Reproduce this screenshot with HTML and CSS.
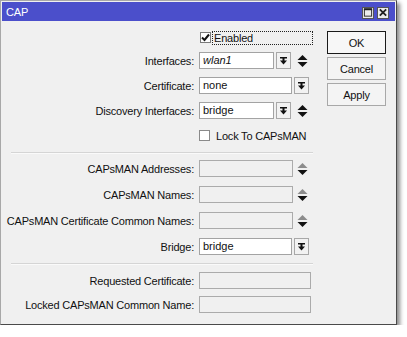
FILE: index.html
```html
<!DOCTYPE html>
<html lang="en">
<head>
    <meta charset="UTF-8">
    <meta name="viewport" content="width=device-width, initial-scale=1.0">
    <link rel="stylesheet" href="styles.css">
    <title>CAP</title>
</head>
<body>
    <div class="window">
        <div class="titlebar">
            <span class="title">CAP</span>
            <div class="winbtns">
                <span class="winbtn">
                    <svg width="11" height="11" viewBox="0 0 11 11"><rect x="1.5" y="1.5" width="8" height="8" fill="none" stroke="#222" stroke-width="1"/><rect x="1" y="1" width="9" height="2" fill="#222"/></svg>
                </span>
                <span class="winbtn">
                    <svg width="11" height="11" viewBox="0 0 11 11"><path d="M2 2 L9 9 M9 2 L2 9" stroke="#222" stroke-width="2"/></svg>
                </span>
            </div>
        </div>
        <div class="content">
            <div class="form">
                <div class="section s1">
                    <div class="row short">
                        <span class="label"></span>
                        <div class="check">
                            <span class="box">
                                <svg width="9" height="9" viewBox="0 0 9 9"><path d="M1 4.5 L3.5 7 L8 1.5" fill="none" stroke="#111" stroke-width="2"/></svg>
                            </span>
                            <span class="focus">Enabled</span>
                        </div>
                    </div>
                    <div class="row">
                        <span class="label">Interfaces:</span>
                        <div class="field">
                            <span class="input w75"><i>wlan1</i></span>
                            <span class="drop"><svg width="9" height="9" viewBox="0 0 9 9"><rect x="1" y="1" width="7" height="1.5" fill="#111"/><rect x="3.5" y="2" width="2" height="3" fill="#111"/><path d="M1 4.5 H8 L4.5 8.5 Z" fill="#111"/></svg></span>
                            <span class="spin"><svg width="11" height="12" viewBox="0 0 11 12"><path d="M0.5 5 L5.5 0 L10.5 5 Z" fill="#111"/><path d="M0.5 7 H10.5 L5.5 12 Z" fill="#111"/></svg></span>
                        </div>
                    </div>
                    <div class="row">
                        <span class="label">Certificate:</span>
                        <div class="field">
                            <span class="input w93">none</span>
                            <span class="drop"><svg width="9" height="9" viewBox="0 0 9 9"><rect x="1" y="1" width="7" height="1.5" fill="#111"/><rect x="3.5" y="2" width="2" height="3" fill="#111"/><path d="M1 4.5 H8 L4.5 8.5 Z" fill="#111"/></svg></span>
                        </div>
                    </div>
                    <div class="row">
                        <span class="label">Discovery Interfaces:</span>
                        <div class="field">
                            <span class="input w75">bridge</span>
                            <span class="drop"><svg width="9" height="9" viewBox="0 0 9 9"><rect x="1" y="1" width="7" height="1.5" fill="#111"/><rect x="3.5" y="2" width="2" height="3" fill="#111"/><path d="M1 4.5 H8 L4.5 8.5 Z" fill="#111"/></svg></span>
                            <span class="spin"><svg width="11" height="12" viewBox="0 0 11 12"><path d="M0.5 5 L5.5 0 L10.5 5 Z" fill="#111"/><path d="M0.5 7 H10.5 L5.5 12 Z" fill="#111"/></svg></span>
                        </div>
                    </div>
                    <div class="row short lock">
                        <span class="label"></span>
                        <div class="check">
                            <span class="box plain"></span>
                            <span class="text">Lock To CAPsMAN</span>
                        </div>
                    </div>
                </div>

                <div class="sep sep1"></div>

                <div class="section s2">
                    <div class="row">
                        <span class="label">CAPsMAN Addresses:</span>
                        <div class="field">
                            <span class="input off w94"></span>
                            <span class="spin off"><svg width="11" height="12" viewBox="0 0 11 12"><path d="M0.5 5 L5.5 0 L10.5 5 Z" fill="#8c8c8c"/><path d="M0.5 7 H10.5 L5.5 12 Z" fill="#111"/></svg></span>
                        </div>
                    </div>
                    <div class="row">
                        <span class="label">CAPsMAN Names:</span>
                        <div class="field">
                            <span class="input off w94"></span>
                            <span class="spin off"><svg width="11" height="12" viewBox="0 0 11 12"><path d="M0.5 5 L5.5 0 L10.5 5 Z" fill="#8c8c8c"/><path d="M0.5 7 H10.5 L5.5 12 Z" fill="#111"/></svg></span>
                        </div>
                    </div>
                    <div class="row">
                        <span class="label">CAPsMAN Certificate Common Names:</span>
                        <div class="field">
                            <span class="input off w94"></span>
                            <span class="spin off"><svg width="11" height="12" viewBox="0 0 11 12"><path d="M0.5 5 L5.5 0 L10.5 5 Z" fill="#8c8c8c"/><path d="M0.5 7 H10.5 L5.5 12 Z" fill="#111"/></svg></span>
                        </div>
                    </div>
                    <div class="row">
                        <span class="label">Bridge:</span>
                        <div class="field">
                            <span class="input w93">bridge</span>
                            <span class="drop"><svg width="9" height="9" viewBox="0 0 9 9"><rect x="1" y="1" width="7" height="1.5" fill="#111"/><rect x="3.5" y="2" width="2" height="3" fill="#111"/><path d="M1 4.5 H8 L4.5 8.5 Z" fill="#111"/></svg></span>
                        </div>
                    </div>
                </div>

                <div class="sep sep2"></div>

                <div class="section s3">
                    <div class="row">
                        <span class="label">Requested Certificate:</span>
                        <div class="field">
                            <span class="input off w112"></span>
                        </div>
                    </div>
                    <div class="row">
                        <span class="label">Locked CAPsMAN Common Name:</span>
                        <div class="field">
                            <span class="input off w112"></span>
                        </div>
                    </div>
                </div>
            </div>

            <div class="buttons">
                <button class="btn default">OK</button>
                <button class="btn">Cancel</button>
                <button class="btn">Apply</button>
            </div>
        </div>
    </div>
</body>
</html>
```

FILE: styles.css
```css
body {
    margin: 0;
    background-color: #ffffff;
    font-family: "Liberation Sans", Arial, sans-serif;
    font-size: 11px;
    color: #111111;
}


.window {
    width: 393px;
    padding: 1px;
    border: 1px solid #a8a8a8;
    border-right-color: #4a4a4a;
    border-bottom-color: #4a4a4a;
    background-color: #f0f0f0;
    box-shadow: 3px 3px 4px rgba(0, 0, 0, 0.45);
}


.titlebar {
    display: flex;
    align-items: center;
    justify-content: space-between;
    height: 19px;
    background-color: #4b4fcb;
    padding: 0 6px 0 4px;
}


.title {
    color: #ffffff;
    font-size: 11px;
    letter-spacing: -0.2px;
    padding-top: 1px;
}


.winbtns {
    display: flex;
    gap: 3px;
    padding-top: 2px;
}


.winbtn {
    display: flex;
    align-items: center;
    justify-content: center;
    width: 12px;
    height: 12px;
    background-color: #ececec;
    border: 1px solid #555555;
    box-sizing: border-box;
}


.content {
    display: flex;
    padding: 10px 0;
}


.form {
    width: 325px;
}


.section {
    display: flex;
    flex-direction: column;
}


.s1 {
    gap: 8px;
}


.s2 {
    gap: 9px;
}


.s3 {
    gap: 7px;
}


.row {
    display: grid;
    grid-template-columns: 192px auto;
    column-gap: 5px;
    align-items: center;
    height: 17px;
}


.row.short {
    height: 13px;
}


.row.lock {
    margin-top: 2px;
}


.label {
    text-align: right;
    white-space: nowrap;
    letter-spacing: -0.2px;
}


.field {
    display: flex;
    align-items: center;
}


.input {
    box-sizing: border-box;
    height: 17px;
    line-height: 15px;
    padding: 0 3px;
    border: 1px solid #a3a3a3;
    background-color: #ffffff;
    white-space: nowrap;
    overflow: hidden;
}


.input.off {
    background-color: #f0f0f0;
    border-color: #ababab;
}


.w75 {
    width: 75px;
}


.w93 {
    width: 93px;
}


.w94 {
    width: 94px;
}


.w112 {
    width: 112px;
}


.drop {
    box-sizing: border-box;
    display: flex;
    align-items: center;
    justify-content: center;
    width: 15px;
    height: 17px;
    margin-left: 2px;
    border: 1px solid #a8a8a8;
    background-color: #f2f2f2;
}


.spin {
    display: flex;
    margin-left: 6px;
}


.spin.off {
    margin-left: 4px;
}


.check {
    display: flex;
    align-items: center;
    height: 13px;
}


.box {
    box-sizing: border-box;
    display: flex;
    align-items: center;
    justify-content: center;
    width: 11px;
    height: 11px;
    margin-left: 1px;
    border: 1px solid #7a7a7a;
    background-color: #ffffff;
}


.box.plain {
    margin-left: 0;
    border-color: #8a8a8a;
}


.focus {
    box-sizing: border-box;
    width: 101px;
    height: 14px;
    line-height: 12px;
    margin-left: 1px;
    padding-left: 1px;
    border: 1px dotted #222222;
    letter-spacing: -0.2px;
}


.text {
    margin-left: 6px;
    letter-spacing: -0.2px;
}


.sep {
    margin-left: 9px;
    width: 302px;
    height: 1px;
    background-color: #d5d5d5;
    border-bottom: 1px solid #fafafa;
}


.sep1 {
    margin-top: 10px;
    margin-bottom: 6px;
}


.sep2 {
    margin-top: 8px;
    margin-bottom: 7px;
}


.buttons {
    display: flex;
    flex-direction: column;
    gap: 3px;
}


.btn {
    width: 59px;
    height: 23px;
    padding: 0;
    font-family: "Liberation Sans", Arial, sans-serif;
    font-size: 11px;
    letter-spacing: -0.2px;
    color: #111111;
    background-color: #f4f4f4;
    border: 1px solid #a8a8a8;
}


.btn.default {
    border: 1px solid #1a1a1a;
    background-color: #f7f7f7;
}
```
